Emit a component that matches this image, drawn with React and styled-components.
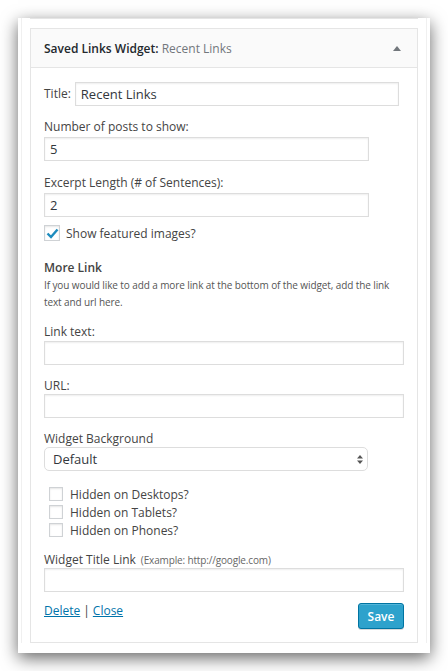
import React from "react";
import styled, { createGlobalStyle } from "styled-components";

const Global = createGlobalStyle`
  html, body { margin: 0; padding: 0; background: #fff; }
  body { font-family: "Open Sans", "Liberation Sans", sans-serif; color: #444; }
  * { box-sizing: border-box; }
`;

const Page = styled.div`
  padding: 18px;
  width: 448px;
`;

const Frame = styled.div`
  width: 412px;
  background: #fff;
  padding: 0 3px 10px;
  box-shadow: 0 5px 16px rgba(0, 0, 0, 0.6);
`;

const Column = styled.div`
  border-left: 1px solid #f0f0f0;
  border-right: 1px solid #f0f0f0;
  padding: 0 8px;
`;

const TopRule = styled.div`
  height: 1px;
  background: #e5e5e5;
  margin-bottom: 9px;
`;

const Widget = styled.div`
  border: 1px solid #e5e5e5;
  background: #fff;
`;

const Header = styled.div`
  height: 39px;
  display: flex;
  align-items: center;
  justify-content: space-between;
  padding: 0 16px 0 13px;
  background: #fafafa;
  border-bottom: 1px solid #e5e5e5;
  font-size: 12px;
  color: #23282d;
`;

const HeaderTitle = styled.div`
  font-weight: 600;
  span { font-weight: 400; color: #72777c; }
`;

const Body = styled.div`
  padding: 14px 13px 13px;
`;

const Row = styled.div`
  display: flex;
  align-items: center;
  margin-top: ${(p) => p.$mt || 0}px;
`;

const Label = styled.div`
  font-size: 12px;
  line-height: ${(p) => p.$lh || 18}px;
  color: #444;
  margin-top: ${(p) => p.$mt || 0}px;
  small { font-size: 10px; color: #666; margin-left: 5px; letter-spacing: -0.15px; }
`;

const Input = styled.input`
  display: block;
  width: ${(p) => p.$w || "100%"};
  height: 24px;
  margin: ${(p) => p.$m || "0"};
  padding: 0 5px;
  border: 1px solid #ddd;
  border-radius: 0;
  background: #fff;
  box-shadow: inset 0 1px 2px rgba(0, 0, 0, 0.07);
  font-family: "Open Sans", "Liberation Sans", sans-serif;
  font-size: 13px;
  color: #32373c;
  outline: none;
`;

const CheckRow = styled.label`
  display: flex;
  align-items: center;
  height: 18px;
  margin-top: ${(p) => p.$mt || 0}px;
  padding-left: ${(p) => p.$indent || 0}px;
  font-size: 12px;
  color: #444;
`;

const Box = styled.span`
  width: ${(p) => p.$size}px;
  height: ${(p) => p.$size}px;
  border: 1px solid #cfd2d5;
  background: #fff;
  box-shadow: inset 0 1px 2px rgba(0, 0, 0, 0.1);
  margin-right: ${(p) => p.$gap}px;
  display: flex;
  align-items: center;
  justify-content: center;
  flex: none;
`;

const SectionTitle = styled.div`
  font-size: 12px;
  font-weight: 600;
  line-height: 18px;
  color: #444;
  margin-top: 17px;
`;

const Desc = styled.div`
  font-size: 10px;
  line-height: 17px;
  letter-spacing: -0.1px;
  color: #555;
`;

const SelectWrap = styled.div`
  position: relative;
  width: 324px;
`;

const Select = styled.select`
  appearance: none;
  -webkit-appearance: none;
  display: block;
  width: 100%;
  height: 24px;
  padding: 0 8px;
  border: 1px solid #ddd;
  border-radius: 5px;
  background: #fff;
  font-family: "Open Sans", "Liberation Sans", sans-serif;
  font-size: 13px;
  color: #32373c;
  outline: none;
`;

const Arrows = styled.svg`
  position: absolute;
  right: 5px;
  top: 8px;
  pointer-events: none;
`;

const Footer = styled.div`
  display: flex;
  justify-content: space-between;
  align-items: flex-start;
  margin-top: 11px;
`;

const Links = styled.div`
  font-size: 12px;
  line-height: 18px;
  margin-top: -1px;
  color: #444;
`;

const Link = styled.a`
  color: #0073aa;
  text-decoration: underline;
`;

const Sep = styled.span`
  margin: 0 3px;
`;

const SaveButton = styled.button`
  height: 26px;
  width: 46px;
  padding: 0;
  background: #2ea2cc;
  border: 1px solid #0074a2;
  border-radius: 3px;
  box-shadow: inset 0 1px 0 rgba(120, 200, 230, 0.5), 0 1px 0 rgba(0, 0, 0, 0.15);
  color: #fff;
  font-family: "Open Sans", "Liberation Sans", sans-serif;
  font-size: 12px;
  font-weight: 600;
  cursor: pointer;
`;

function Check({ size, gap, checked }) {
  return (
    <Box $size={size} $gap={gap}>
      {checked && (
        <svg width="13" height="11" viewBox="0 0 13 11">
          <path d="M1.5 5.5 L5 9 L11.5 1.5" fill="none" stroke="#1e8cbe" strokeWidth="2.4" />
        </svg>
      )}
    </Box>
  );
}

export default function App() {
  return (
    <>
      <Global />
      <Page>
        <Frame>
          <Column>
            <TopRule />
            <Widget>
              <Header>
                <HeaderTitle>
                  Saved Links Widget: <span>Recent Links</span>
                </HeaderTitle>
                <svg width="8" height="5" viewBox="0 0 8 5">
                  <path d="M0 5 L4 0 L8 5 Z" fill="#72777c" />
                </svg>
              </Header>
              <Body>
                <Row>
                  <Label>Title:</Label>
                  <Input $w="324px" $m="0 0 0 4px" defaultValue="Recent Links" />
                </Row>

                <Label $mt={12}>Number of posts to show:</Label>
                <Input $w="325px" $m="1px 0 0" defaultValue="5" />

                <Label $mt={13}>Excerpt Length (# of Sentences):</Label>
                <Input $w="325px" $m="1px 0 0" defaultValue="2" />

                <CheckRow $mt={7}>
                  <Check size={16} gap={6} checked />
                  Show featured images?
                </CheckRow>

                <SectionTitle>More Link</SectionTitle>
                <Desc>
                  If you would like to add a more link at the bottom of the widget, add the link
                  text and url here.
                </Desc>

                <Label $mt={12}>Link text:</Label>
                <Input />

                <Label $mt={12}>URL:</Label>
                <Input $m="-1px 0 0" />

                <Label $mt={13} $lh={16}>Widget Background</Label>
                <SelectWrap>
                  <Select defaultValue="Default">
                    <option>Default</option>
                  </Select>
                  <Arrows width="6" height="9" viewBox="0 0 6 9">
                    <path d="M0 3.5 L3 0 L6 3.5 Z M0 5.5 L3 9 L6 5.5 Z" fill="#555" />
                  </Arrows>
                </SelectWrap>

                <CheckRow $mt={14} $indent={5}>
                  <Check size={14} gap={7} />
                  Hidden on Desktops?
                </CheckRow>
                <CheckRow $indent={5}>
                  <Check size={14} gap={7} />
                  Hidden on Tablets?
                </CheckRow>
                <CheckRow $indent={5}>
                  <Check size={14} gap={7} />
                  Hidden on Phones?
                </CheckRow>

                <Label $mt={13} $lh={16}>
                  Widget Title Link<small>(Example: http://google.com)</small>
                </Label>
                <Input />

                <Footer>
                  <Links>
                    <Link href="#">Delete</Link>
                    <Sep>|</Sep>
                    <Link href="#">Close</Link>
                  </Links>
                  <SaveButton>Save</SaveButton>
                </Footer>
              </Body>
            </Widget>
          </Column>
        </Frame>
      </Page>
    </>
  );
}
